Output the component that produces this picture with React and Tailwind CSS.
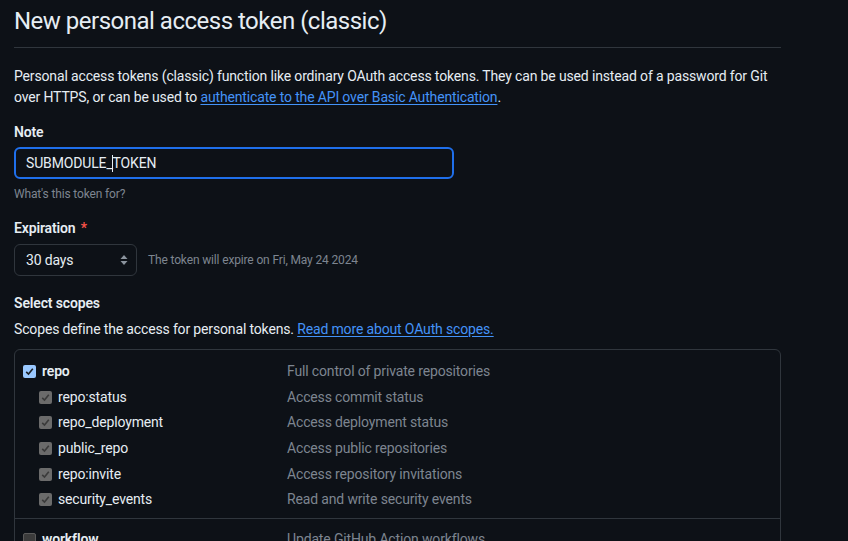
export default function App() {
  const subs = [
    ['repo:status', 'Access commit status'],
    ['repo_deployment', 'Access deployment status'],
    ['public_repo', 'Access public repositories'],
    ['repo:invite', 'Access repository invitations'],
    ['security_events', 'Read and write security events'],
  ]

  return (
    <div className="min-h-screen bg-[#0d1117] text-[#e6edf3] font-['Roboto',sans-serif] text-[14px] tracking-[-0.15px] overflow-hidden">
      <div className="w-[767px] ml-[14px]">
        <h1 className="text-[24px] leading-9 font-normal tracking-[-0.5px] pt-[3px] pb-2 border-b border-[#30363d]">
          New personal access token (classic)
        </h1>

        <p className="mt-[18px] leading-[21px]">
          <span className="whitespace-nowrap">Personal access tokens (classic) function like ordinary OAuth access tokens. They can be used instead of a password for Git</span>
          <br />
          over HTTPS, or can be used to{' '}
          <a className="text-[#4493f8] underline underline-offset-2">authenticate to the API over Basic Authentication</a>.
        </p>

        <div className="mt-[14px] font-semibold leading-[21px]">Note</div>
        <div className="mt-1 w-[440px] h-8 rounded-md border-2 border-[#1f6feb] flex items-center px-[10px]">
          <span>SUBMODULE_</span>
          <span className="w-px h-[17px] bg-[#e6edf3] -ml-px"></span>
          <span>TOKEN</span>
        </div>
        <div className="mt-[6px] text-[12px] leading-[18px] text-[#7d8590]">What's this token for?</div>

        <div className="mt-[15px] font-semibold leading-[21px]">
          Expiration <span className="text-[#f85149] ml-[2px]">*</span>
        </div>
        <div className="mt-[5px] flex items-center gap-[11px]">
          <div className="w-[123px] h-8 rounded-md border border-[#30363d] flex items-center justify-between pl-[11px] pr-[8px]">
            <span>30 days</span>
            <svg width="8" height="12" viewBox="0 0 8 12" className="text-[#8b949e]">
              <path d="M4 1 L7.5 5 H0.5 Z" fill="currentColor" />
              <path d="M4 11 L7.5 7 H0.5 Z" fill="currentColor" />
            </svg>
          </div>
          <span className="text-[12px] text-[#7d8590]">The token will expire on Fri, May 24 2024</span>
        </div>

        <div className="mt-[17px] font-semibold leading-[21px]">Select scopes</div>
        <p className="mt-[5px] leading-[21px]">
          Scopes define the access for personal tokens.{' '}
          <a className="text-[#4493f8] underline underline-offset-2">Read more about OAuth scopes.</a>
        </p>

        <div className="mt-[9px] rounded-md border border-[#30363d]">
          <div className="pt-[9px] pb-[5px] border-b border-[#30363d]">
            <div className="flex items-center h-[25.6px] pl-[8px]">
              <div className="w-[264px] flex items-center gap-[6px]">
                <Check tone="blue" />
                <span className="font-semibold">repo</span>
              </div>
              <span className="text-[#7d8590]">Full control of private repositories</span>
            </div>
            {subs.map(([name, desc]) => (
              <div key={name} className="flex items-center h-[25.6px] pl-[8px]">
                <div className="w-[264px] flex items-center gap-[6px] pl-4">
                  <Check tone="gray" />
                  <span>{name}</span>
                </div>
                <span className="text-[#7d8590]">{desc}</span>
              </div>
            ))}
          </div>
          <div className="pt-2 pb-2">
            <div className="flex items-center h-[25.6px] pl-[8px]">
              <div className="w-[264px] flex items-center gap-[6px]">
                <Check tone="off" />
                <span className="font-semibold">workflow</span>
              </div>
              <span className="text-[#7d8590]">Update GitHub Action workflows</span>
            </div>
          </div>
        </div>
      </div>
    </div>
  )
}

function Check({ tone }) {
  if (tone === 'off') {
    return <span className="w-[13px] h-[13px] rounded-[2px] bg-[#3b3b3b] border border-[#5a5a5a] shrink-0" />
  }
  const bg = tone === 'blue' ? 'bg-[#99c8ff]' : 'bg-[#6b6b6b]'
  const stroke = tone === 'blue' ? '#1b1f24' : '#3a3a3a'
  return (
    <span className={`w-[13px] h-[13px] rounded-[2px] ${bg} flex items-center justify-center shrink-0`}>
      <svg width="9" height="9" viewBox="0 0 9 9">
        <path d="M1.2 4.8 L3.5 7 L7.8 1.8" fill="none" stroke={stroke} strokeWidth="1.6" />
      </svg>
    </span>
  )
}
